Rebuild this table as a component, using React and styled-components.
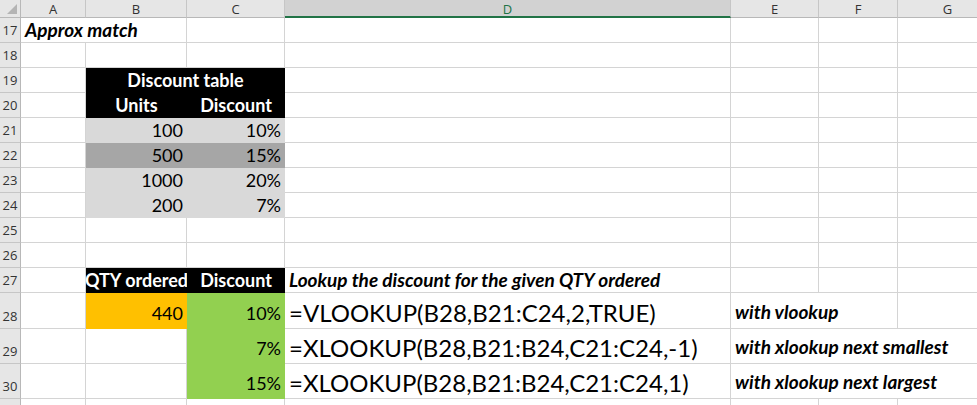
import styled, { createGlobalStyle } from 'styled-components'

const GlobalStyle = createGlobalStyle`
  body {
    margin: 0;
    background: #ffffff;
    overflow: hidden;
    font-family: Lato, "Liberation Sans", sans-serif;
  }
`

const GRID = '#d4d4d4'

const Sheet = styled.div`
  display: grid;
  grid-template-columns: 21px 65px 101px 98px 446px 88px 79px 100px;
  grid-template-rows: 18px repeat(11, 25px) 36px 35px 35px 25px;
  width: 977px;
  height: 405px;
  overflow: hidden;
`

const Corner = styled.div`
  background: #e6e6e6;
  border-right: 1px solid #b8b8b8;
  border-bottom: 1px solid #b8b8b8;
  box-sizing: border-box;
  position: relative;
  &::after {
    content: '';
    position: absolute;
    right: 3px;
    bottom: 3px;
    border-style: solid;
    border-width: 0 0 10px 10px;
    border-color: transparent transparent #b4b4b4 transparent;
  }
`

const ColHead = styled.div`
  box-sizing: border-box;
  display: flex;
  align-items: center;
  justify-content: center;
  background: ${p => (p.$active ? '#d2d2d2' : '#e6e6e6')};
  color: ${p => (p.$active ? '#217346' : '#333')};
  border-right: 1px solid #c6c6c6;
  border-bottom: ${p => (p.$active ? '2px solid #217346' : '1px solid #b8b8b8')};
  font-family: "Open Sans", "Noto Sans", sans-serif;
  font-size: 13px;
  padding-top: 1px;
`

const RowHead = styled.div`
  box-sizing: border-box;
  display: flex;
  align-items: flex-end;
  justify-content: center;
  padding-bottom: 3px;
  background: #e6e6e6;
  color: #333;
  border-right: 1px solid #b8b8b8;
  border-bottom: 1px solid #c6c6c6;
  font-family: "Open Sans", "Noto Sans", sans-serif;
  font-size: 13px;
`

const Cell = styled.div`
  box-sizing: border-box;
  grid-column: span ${p => p.$span || 1};
  display: flex;
  align-items: flex-end;
  justify-content: ${p =>
    p.$align === 'right' ? 'flex-end' : p.$align === 'center' ? 'center' : 'flex-start'};
  padding: 0 3px ${p => p.$pb ?? 0}px 4px;
  background: ${p => p.$fill || '#ffffff'};
  border-right: 1px solid ${p => p.$fill || GRID};
  border-bottom: 1px solid ${p => p.$fill || GRID};
  color: ${p => p.$color || '#000'};
  font-size: ${p => p.$size || 18}px;
  font-weight: ${p => (p.$bold ? 700 : 400)};
  font-style: ${p => (p.$italic ? 'italic' : 'normal')};
  white-space: nowrap;
  line-height: 1.2;
`

const BLACK = '#000000'
const LIGHT = '#d9d9d9'
const DARK = '#a6a6a6'
const ORANGE = '#ffc000'
const GREEN = '#92d050'

const cols = ['A', 'B', 'C', 'D', 'E', 'F', 'G']

const heading = { $bold: true, $color: '#fff', $fill: BLACK, $align: 'center' }
const note = { $bold: true, $italic: true, $size: 19 }
const formula = { $size: 24, $pb: 0 }
const value = fill => ({ $fill: fill, $align: 'right' })
const result = { $fill: GREEN, $align: 'right', $pb: 3 }

const rows = [
  { n: 17, cells: [{ span: 2, text: 'Approx match', p: note }, {}, {}, {}, {}, {}] },
  { n: 18, cells: [{}, {}, {}, {}, {}, {}, {}] },
  { n: 19, cells: [{}, { span: 2, text: 'Discount table', p: heading }, {}, {}, {}, {}] },
  { n: 20, cells: [{}, { text: 'Units', p: heading }, { text: 'Discount', p: heading }, {}, {}, {}, {}] },
  { n: 21, cells: [{}, { text: '100', p: value(LIGHT) }, { text: '10%', p: value(LIGHT) }, {}, {}, {}, {}] },
  { n: 22, cells: [{}, { text: '500', p: value(DARK) }, { text: '15%', p: value(DARK) }, {}, {}, {}, {}] },
  { n: 23, cells: [{}, { text: '1000', p: value(LIGHT) }, { text: '20%', p: value(LIGHT) }, {}, {}, {}, {}] },
  { n: 24, cells: [{}, { text: '200', p: value(LIGHT) }, { text: '7%', p: value(LIGHT) }, {}, {}, {}, {}] },
  { n: 25, cells: [{}, {}, {}, {}, {}, {}, {}] },
  { n: 26, cells: [{}, {}, {}, {}, {}, {}, {}] },
  { n: 27, cells: [{}, { text: 'QTY ordered', p: { ...heading, $pad: true } }, { text: 'Discount', p: heading }, { text: 'Lookup the discount for the given QTY ordered', p: note }, {}, {}, {}] },
  { n: 28, cells: [{}, { text: '440', p: { $fill: ORANGE, $align: 'right', $pb: 3 } }, { text: '10%', p: result }, { text: '=VLOOKUP(B28,B21:C24,2,TRUE)', p: formula }, { span: 2, text: 'with vlookup', p: { ...note, $pb: 4 } }, {}] },
  { n: 29, cells: [{}, {}, { text: '7%', p: result }, { text: '=XLOOKUP(B28,B21:B24,C21:C24,-1)', p: formula }, { span: 3, text: 'with xlookup next smallest', p: { ...note, $pb: 4 } }] },
  { n: 30, cells: [{}, {}, { text: '15%', p: result }, { text: '=XLOOKUP(B28,B21:B24,C21:C24,1)', p: formula }, { span: 3, text: 'with xlookup next largest', p: { ...note, $pb: 4 } }] },
  { n: 31, cells: [{}, {}, {}, {}, {}, {}, {}] },
]

export default function App() {
  return (
    <>
      <GlobalStyle />
      <Sheet>
        <Corner />
        {cols.map(c => (
          <ColHead key={c} $active={c === 'D'}>{c}</ColHead>
        ))}
        {rows.map(r => [
          <RowHead key={'h' + r.n}>{r.n}</RowHead>,
          ...r.cells.map((c, i) => (
            <Cell key={r.n + '-' + i} $span={c.span} {...(c.p || {})}>
              {c.text}
            </Cell>
          )),
        ])}
      </Sheet>
    </>
  )
}
